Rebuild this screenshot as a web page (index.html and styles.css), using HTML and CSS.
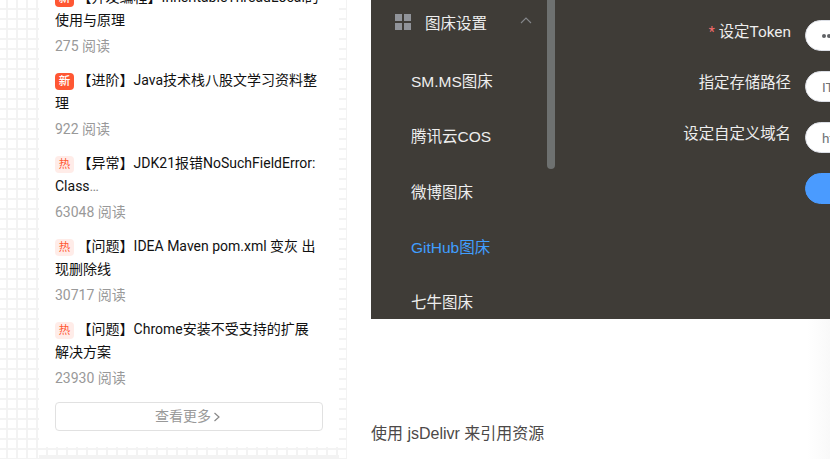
FILE: index.html
```
<!DOCTYPE html>
<html lang="zh-CN">
<head>
<meta charset="utf-8">
<title>图床设置</title>
<link rel="stylesheet" href="styles.css">
</head>
<body>
<div class="page">
  <aside class="side">
    <div class="card">
      <article class="item"><h3><span class="tag new">新</span>【并发编程】InheritableThreadLocal的<br>使用与原理</h3><p>275 阅读</p></article>
      <article class="item"><h3><span class="tag new">新</span>【进阶】Java技术栈八股文学习资料整<br>理</h3><p>922 阅读</p></article>
      <article class="item"><h3><span class="tag">热</span>【异常】JDK21报错NoSuchFieldError:<br>Class<span class="dots">…</span></h3><p>63048 阅读</p></article>
      <article class="item"><h3><span class="tag">热</span>【问题】IDEA Maven pom.xml 变灰 出<br>现删除线</h3><p>30717 阅读</p></article>
      <article class="item"><h3><span class="tag">热</span>【问题】Chrome安装不受支持的扩展<br>解决方案</h3><p>23930 阅读</p></article>
      <a class="more">查看更多<svg width="8" height="10" viewBox="0 0 8 10"><path d="M1.5 1 6 5 1.5 9"/></svg></a>
    </div>
    <div class="next-card"></div>
  </aside>
  <main class="article">
    <section class="app">
      <nav class="menu">
        <div class="menu-head">
          <svg class="grid-icon" width="16" height="16" viewBox="0 0 16 16"><path d="M0 0h7v7H0zM9 0h7v7H9zM0 9h7v7H0zM9 9h7v7H9z"/></svg>
          <span>图床设置</span>
          <svg class="chevron" width="12" height="7" viewBox="0 0 12 7"><path d="M1 6 6 1l5 5"/></svg>
        </div>
        <a>SM.MS图床</a>
        <a>腾讯云COS</a>
        <a>微博图床</a>
        <a class="active">GitHub图床</a>
        <a>七牛图床</a>
      </nav>
      <div class="scroll"></div>
      <form class="form">
        <div class="row"><label><i>*</i> 设定Token</label><div class="field"><b></b><b></b><b></b></div></div>
        <div class="row"><label>指定存储路径</label><div class="field">ITwords/</div></div>
        <div class="row"><label>设定自定义域名</label><div class="field">https://</div></div>
        <div class="row"><label></label><div class="field submit"></div></div>
      </form>
    </section>
    <p class="text">使用 jsDelivr 来引用资源</p>
  </main>
</div>
</body>
</html>
```
FILE: styles.css
```
* { box-sizing: border-box; }
body {
  margin: 0;
  overflow: hidden;
  background: #fff;
  font-family: Roboto, "Noto Sans CJK SC", sans-serif;
}
.page { display: flex; width: 830px; height: 459px; overflow: hidden; }
.side {
  flex: 0 0 347px;
  height: 459px;
  padding: 0 7px 0 39px;
  border-right: 1px solid #f3f3f3;
  background-color: #fff;
  background-image:
    linear-gradient(90deg, transparent 6px, #f3f3f3 6px, #f3f3f3 8px, transparent 8px),
    linear-gradient(transparent 8px, #f3f3f3 8px, #f3f3f3 10px, transparent 10px);
  background-size: 10px 10px;
}
.card { width: 300px; height: 447px; padding: 0 16px; background: #fff; overflow: hidden; }
.item { height: 83px; }
.item:first-child { margin-top: -14px; }
.item h3 {
  height: 46px;
  margin: 0;
  color: #111;
  font-size: 14px;
  font-weight: 400;
  line-height: 23px;
  white-space: nowrap;
}
.item p { margin: 3px 0 0; color: #999; font-size: 14px; line-height: 23px; }
.dots { color: #888; }
.tag {
  display: inline-block;
  width: 19px;
  height: 17px;
  margin-right: 3.6px;
  border-radius: 4px;
  background: #ffece8;
  color: #ff5733;
  font-size: 11.5px;
  line-height: 17px;
  text-align: center;
  vertical-align: 0;
}
.tag.new { background: #ff5733; color: #fff; font-weight: 500; }
.more {
  display: flex;
  align-items: center;
  justify-content: center;
  width: 268px;
  height: 29px;
  margin-top: 1px;
  padding: 0 2px 3px 0;
  border: 1px solid #e1e1e1;
  border-radius: 4px;
  color: #999;
  font-size: 14px;
}
.more svg { margin: 3px 0 0 2px; fill: none; stroke: #888; stroke-width: 1.2; }
.next-card { width: 300px; height: 4px; margin-top: 8px; background: #f3f3f3; }
.article {
  flex: 1;
  min-width: 0;
  padding-left: 24px;
  background: linear-gradient(90deg, transparent 460px, #f9f9f9);
}
.app {
  display: flex;
  height: 319px;
  background: #3f3c37;
  color: #eee;
  font-family: "Liberation Sans", "Noto Sans CJK SC", sans-serif;
  overflow: hidden;
}
.menu { flex: 0 0 176px; font-size: 15.5px; }
.menu-head { display: flex; align-items: center; height: 56px; margin-top: -6px; padding: 0 15px 0 24px; }
.menu-head span { margin-left: 14px; }
.grid-icon { fill: #909399; }
.chevron { margin-left: auto; margin-top: -3px; fill: none; stroke: #85878b; stroke-width: 1.1; }
.menu a { display: block; height: 55.3px; padding-left: 40px; line-height: 63px; white-space: nowrap; }
.menu a.active { color: #409eff; }
.scroll { flex: 0 0 8px; height: 169px; border-radius: 0 0 4px 4px; background: #6e7170; }
.form { flex: 1; padding-top: 20px; }
.row { display: flex; align-items: flex-start; height: 51px; }
.row label {
  flex: 0 0 236px;
  height: 31px;
  font-family: Roboto, "Noto Sans CJK SC", sans-serif;
  font-size: 15.4px;
  line-height: 24px;
  text-align: right;
  white-space: nowrap;
}
.row i { color: #f56c6c; font-size: 14px; font-style: normal; }
.field {
  display: flex;
  flex: 0 0 200px;
  align-items: center;
  height: 31px;
  margin-left: 14px;
  padding-left: 16px;
  border: 1px solid #dcdfe6;
  border-radius: 16px;
  background: #fff;
  color: #707276;
  font-family: Roboto, "Noto Sans CJK SC", sans-serif;
  font-size: 13.5px;
}
.field b { width: 4px; height: 4px; margin-right: 1px; border-radius: 50%; background: #606266; }
.field.submit { border-color: #4a9bff; background: #4a9bff; }
.text {
  margin: 103px 0 0;
  color: #4c4948;
  font-family: "Liberation Sans", "Noto Sans CJK SC", sans-serif;
  font-size: 16px;
  line-height: 24px;
}
```
